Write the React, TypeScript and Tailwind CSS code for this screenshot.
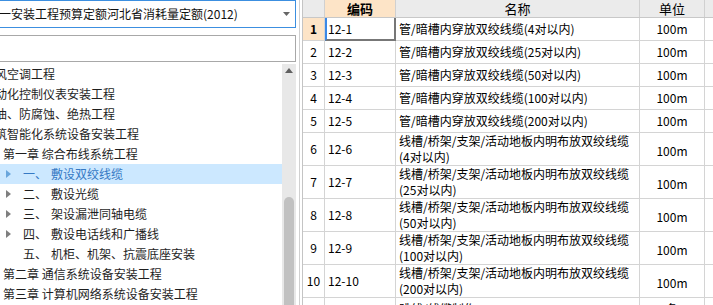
import React from 'react';

type TreeItem = { prefix?: string; text: string; level: 0 | 1 | 2; arrow?: boolean; selected?: boolean };

const treeItems: TreeItem[] = [
  { text: '通风空调工程', level: 0 },
  { text: '自动化控制仪表安装工程', level: 0 },
  { text: '刷油、防腐蚀、绝热工程', level: 0 },
  { text: '建筑智能化系统设备安装工程', level: 0 },
  { text: '第一章 综合布线系统工程', level: 1 },
  { prefix: '一、', text: '敷设双绞线缆', level: 2, arrow: true, selected: true },
  { prefix: '二、', text: '敷设光缆', level: 2, arrow: true },
  { prefix: '三、', text: '架设漏泄同轴电缆', level: 2, arrow: true },
  { prefix: '四、', text: '敷设电话线和广播线', level: 2, arrow: true },
  { prefix: '五、', text: '机柜、机架、抗震底座安装', level: 2 },
  { text: '第二章 通信系统设备安装工程', level: 1 },
  { text: '第三章 计算机网络系统设备安装工程', level: 1 },
];

const indent = { 0: 'ml-[-37px]', 1: 'ml-[-17px]', 2: 'ml-[3px]' };

type Row = { n: number; code: string; name: string[]; unit: string };

const rows: Row[] = [
  { n: 1, code: '12-1', name: ['管/暗槽内穿放双绞线缆(4对以内)'], unit: '100m' },
  { n: 2, code: '12-2', name: ['管/暗槽内穿放双绞线缆(25对以内)'], unit: '100m' },
  { n: 3, code: '12-3', name: ['管/暗槽内穿放双绞线缆(50对以内)'], unit: '100m' },
  { n: 4, code: '12-4', name: ['管/暗槽内穿放双绞线缆(100对以内)'], unit: '100m' },
  { n: 5, code: '12-5', name: ['管/暗槽内穿放双绞线缆(200对以内)'], unit: '100m' },
  { n: 6, code: '12-6', name: ['线槽/桥架/支架/活动地板内明布放双绞线缆', '(4对以内)'], unit: '100m' },
  { n: 7, code: '12-7', name: ['线槽/桥架/支架/活动地板内明布放双绞线缆', '(25对以内)'], unit: '100m' },
  { n: 8, code: '12-8', name: ['线槽/桥架/支架/活动地板内明布放双绞线缆', '(50对以内)'], unit: '100m' },
  { n: 9, code: '12-9', name: ['线槽/桥架/支架/活动地板内明布放双绞线缆', '(100对以内)'], unit: '100m' },
  { n: 10, code: '12-10', name: ['线槽/桥架/支架/活动地板内明布放双绞线缆', '(200对以内)'], unit: '100m' },
  { n: 11, code: '12-11', name: ['跳线/线缆制作'], unit: '条' },
];

function Arrow({ selected }: { selected?: boolean }) {
  return (
    <svg width="5" height="8" viewBox="0 0 5 8" className="ml-[3px]">
      <path d="M0 0 L5 4 L0 8 Z" fill={selected ? '#6aa6dc' : '#7f7f7f'} />
    </svg>
  );
}

function TreePanel() {
  return (
    <div className="flex flex-1 min-h-0 pt-[2px]">
      <div className="flex-1 min-w-0 overflow-hidden">
        {treeItems.map((it, i) => (
          <div
            key={i}
            className={`h-[20px] flex items-center whitespace-nowrap ${
              it.selected ? 'bg-[#cce8ff] text-[#3579c4]' : 'text-[#1e1e1e]'
            }`}
          >
            <div className={`flex items-center ${indent[it.level]}`}>
              <div className="w-[20px] flex items-center">{it.arrow && <Arrow selected={it.selected} />}</div>
              {it.prefix && <span className="inline-block w-[28px]">{it.prefix}</span>}
              <span>{it.text}</span>
            </div>
          </div>
        ))}
      </div>
      <div className="w-[14px] bg-[#e8e8e8] flex flex-col items-center">
        <svg width="8" height="5" viewBox="0 0 8 5" className="mt-[4px]">
          <path d="M0 5 L4 0 L8 5 Z" fill="#606060" />
        </svg>
        <div className="mt-[124px] w-[10px] flex-1 rounded-t-full bg-[#c1c1c1]" />
      </div>
    </div>
  );
}

function LeftPanel() {
  return (
    <div className="w-[296px] h-full flex flex-col overflow-hidden text-[12px]">
      <div className="h-[28px] ml-[-10px] border border-[#3c8fe0] flex items-center pl-[8px] pr-[5px] bg-white">
        <span className="flex-1 whitespace-nowrap text-[#111]">一安装工程预算定额河北省消耗量定额(2012)</span>
        <svg width="7" height="4" viewBox="0 0 7 4">
          <path d="M0 0 L7 0 L3.5 4 Z" fill="#666" />
        </svg>
      </div>
      <div className="h-[27px] mt-[7px] ml-[-10px] border border-[#a8a8a8] bg-white" />
      <TreePanel />
    </div>
  );
}

function Table() {
  return (
    <div className="flex-1 min-w-0 h-full overflow-hidden border-l border-[#c4c4c4] text-[12px] leading-[16px] text-black">
      <div className="w-[500px]">
        <div className="h-[18px] flex border-b border-[#c8c8c8] bg-[#ebebeb] text-[13px]">
          <div className="w-[22px] border-r border-[#d0d0d0]" />
          <div className="w-[71px] border-r border-[#d0d0d0] bg-[#fde4c7] flex items-center justify-center font-bold">编码</div>
          <div className="w-[244px] border-r border-[#d0d0d0] flex items-center justify-center">名称</div>
          <div className="w-[65px] border-r border-[#d0d0d0] flex items-center justify-center">单位</div>
          <div className="w-[60px]" />
        </div>
        {rows.map((r) => {
          const tall = r.name.length > 1;
          return (
            <div key={r.n} className={`flex border-b border-[#d4d4d4] ${tall ? 'h-[33px]' : 'h-[23px]'}`}>
              <div
                className={`w-[22px] border-r border-[#d4d4d4] flex items-center justify-center ${
                  r.n === 1 ? 'bg-[#fde4c7] font-bold' : ''
                }`}
              >
                {r.n}
              </div>
              <div className="relative w-[71px] border-r border-[#d4d4d4] flex items-center pl-[3px]">
                {r.code}
                {r.n === 1 && (
                  <div className="absolute left-0 top-0 right-[-1px] bottom-[-1px] border-l-2 border-l-[#3b88e6] border-r-2 border-b-2 border-r-[#777] border-b-[#777]" />
                )}
              </div>
              <div className="w-[244px] border-r border-[#d4d4d4] flex flex-col justify-center pl-[3px] whitespace-nowrap overflow-hidden">
                {r.name.map((l, i) => (
                  <div key={i}>{l}</div>
                ))}
              </div>
              <div className={`w-[65px] border-r border-[#d4d4d4] flex justify-center ${tall ? 'items-center pt-[4px]' : 'items-center'}`}>
                {r.unit}
              </div>
              <div className="w-[60px]" />
            </div>
          );
        })}
      </div>
    </div>
  );
}

export default function App() {
  return (
    <div className="w-[713px] h-[305px] flex bg-white overflow-hidden font-['Noto_Sans_CJK_SC',sans-serif]">
      <LeftPanel />
      <div className="w-[4px] border-r border-[#d0d0d0]" />
      <div className="w-[2px]" />
      <Table />
    </div>
  );
}
